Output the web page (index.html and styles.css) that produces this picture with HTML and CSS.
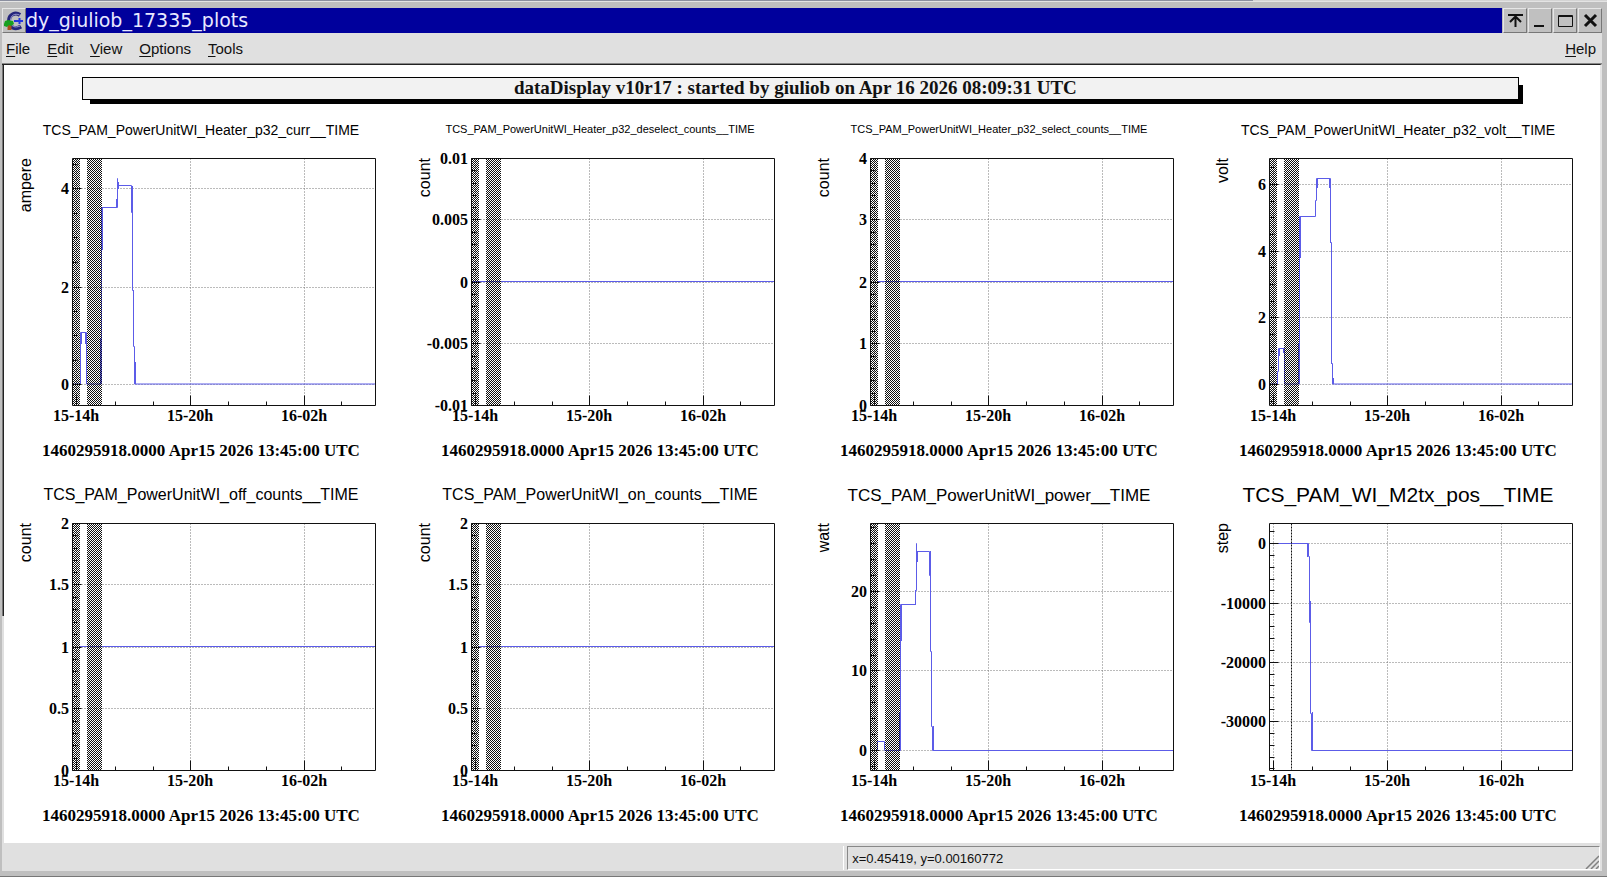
FILE: index.html
```html
<!DOCTYPE html>
<html lang="en">
<head>
    <meta charset="UTF-8">
    <meta name="viewport" content="width=device-width, initial-scale=1.0">
    <title>dy_giuliob_17335_plots</title>
    <link rel="stylesheet" href="styles.css">
</head>
<body>

<div class="desktop-edge"></div>

<div class="window">
    <div class="titlebar">
        <button class="win-btn" aria-label="Window menu">
            <svg width="22" height="23" viewBox="0 0 22 23">
                <path d="M17 6C12.500 3 6 5 6 12s6.500 9 12 5.500" fill="none" stroke="#26267c" stroke-width="4"/>
                <path d="M16.500 6C12 4 7.500 6 7.500 12s5 7 9.500 5" fill="none" stroke="#9a9ad0" stroke-width="1"/>
                <path d="M11 12h9M16.500 9v6" stroke="#2436e0" stroke-width="2"/>
                <path d="M4.500 15h4v6h-4z" fill="#a8501c"/>
                <path d="M1 15l1-3 3-1 5 1 1 3-3 2-2-1-2 2-3-1z" fill="#18a020"/>
            </svg>
        </button>
        <h1>dy_giuliob_17335_plots</h1>
        <button class="win-btn" aria-label="Shade">
            <svg width="21" height="21" viewBox="0 0 21 21"><path d="M3 5h15M10.500 6v11M5 12l5.500-5.500L16 12" fill="none" stroke="#111" stroke-width="2"/></svg>
        </button>
        <button class="win-btn" aria-label="Minimize">
            <svg width="21" height="21" viewBox="0 0 21 21"><path d="M4 16h10" stroke="#111" stroke-width="2"/></svg>
        </button>
        <button class="win-btn" aria-label="Maximize">
            <svg width="21" height="21" viewBox="0 0 21 21"><path d="M3.500 5.500h14v11h-14zM3 6.500h15" fill="none" stroke="#111"/></svg>
        </button>
        <button class="win-btn" aria-label="Close">
            <svg width="21" height="21" viewBox="0 0 21 21"><path d="M5 5l11 11M16 5L5 16" stroke="#111" stroke-width="3"/></svg>
        </button>
    </div>

    <div class="menubar">
        <button><u>F</u>ile</button>
        <button><u>E</u>dit</button>
        <button><u>V</u>iew</button>
        <button><u>O</u>ptions</button>
        <button><u>T</u>ools</button>
        <button class="help"><u>H</u>elp</button>
    </div>

    <div class="canvas">
        <div class="banner">dataDisplay v10r17 : started by giuliob on Apr 16 2026 08:09:31 UTC</div>
        <div class="plots" id="plots"></div>
    </div>

    <div class="statusbar">
        <div class="status-left"></div>
        <div class="status-text">x=0.45419, y=0.00160772
            <svg class="grip" width="14" height="14" viewBox="0 0 14 14">
                <path d="M1 14L14 1M6 14l8-8M11 14l3-3" stroke="#808080" stroke-width="1.500"/>
            </svg>
        </div>
    </div>
</div>

<!-- shared fill for the masked time ranges -->
<svg class="defs" width="0" height="0">
    <pattern id="hatch" width="2" height="2" patternUnits="userSpaceOnUse">
        <rect width="1" height="1" fill="#111"/>
        <rect x="1" y="1" width="1" height="1" fill="#111"/>
    </pattern>
</svg>

<script>
// Frame of each plot inside its pad
const LEFT = 68.5, RIGHT = 371.5, TOP = 48.5, BOTTOM = 295.5;
const START = '1460295918.0000 Apr15 2026 13:45:00 UTC';

// labels: [text, y]; div: minor divisions per label step; bands: masked ranges
const plots = [
    { title: 'TCS_PAM_PowerUnitWI_Heater_p32_curr__TIME', size: 14, unit: 'ampere', div: 4, bands: true,
      labels: [['0', 274.5], ['2', 177.5], ['4', 78.5]],
      line: 'M68.500 274H76.500V222.500H82.500V274H97.500V97.500H113.500V68.500V75.500H127.500V102.500H128.500V180.500H129.500V236.500H130.500V274H371.500',
      thick: 'M77.500 222v12M81.500 222v12M96.500 228v46M98.500 97v43M112.500 89v9M114.500 72v7M128.500 76v27M129.500 180v7M131.500 252v22' },
    { title: 'TCS_PAM_PowerUnitWI_Heater_p32_deselect_counts__TIME', size: 11, unit: 'count', div: 5, bands: true,
      labels: [['-0.01', 295.5], ['-0.005', 233.5], ['0', 172.5], ['0.005', 109.5], ['0.01', 48.5]],
      line: 'M68.500 171.500H371.500' },
    { title: 'TCS_PAM_PowerUnitWI_Heater_p32_select_counts__TIME', size: 11, unit: 'count', div: 5, bands: true,
      labels: [['0', 295.5], ['1', 233.5], ['2', 172.5], ['3', 109.5], ['4', 48.5]],
      line: 'M76 171.500H371.500' },
    { title: 'TCS_PAM_PowerUnitWI_Heater_p32_volt__TIME', size: 14, unit: 'volt', div: 4, bands: true,
      labels: [['0', 274.5], ['2', 207.5], ['4', 141.5], ['6', 74.5]],
      line: 'M68.500 274H76.500V261.500H77.500V238.500H83.500V274H98.500V106.500H114.500V90.500H115.500V68.500H129.500V132.500H130.500V253.500H131.500V274H371.500',
      thick: 'M78.500 239v7M82.500 239v4M97.500 233v41M99.500 106v42M114.500 97v9M116.500 69v9M128.500 69v9M129.500 107v26M130.500 222v32M132.500 268v6' },
    { title: 'TCS_PAM_PowerUnitWI_off_counts__TIME', size: 16, unit: 'count', div: 5, bands: true,
      labels: [['0', 295.5], ['0.5', 233.5], ['1', 172.5], ['1.5', 109.5], ['2', 48.5]],
      line: 'M76 171.500H371.500' },
    { title: 'TCS_PAM_PowerUnitWI_on_counts__TIME', size: 16, unit: 'count', div: 5, bands: true,
      labels: [['0', 295.5], ['0.5', 233.5], ['1', 172.5], ['1.5', 109.5], ['2', 48.5]],
      line: 'M76 171.500H371.500' },
    { title: 'TCS_PAM_PowerUnitWI_power__TIME', size: 17, unit: 'watt', div: 5, bands: true,
      labels: [['0', 275.5], ['10', 195.5], ['20', 116.5]],
      line: 'M68.500 275.500H75.500V266.500H82.500V275.500H98.500V129.500H113.500V115.500H114.500V68.500V76.500H127.500V100.500H128.500V176.500H129.500V251.500H130.500V275.500H371.500',
      thick: 'M97.500 238v38M99.500 129v37M113.500 115v15M115.500 76v11M128.500 76v25M131.500 251v24' },
    { title: 'TCS_PAM_WI_M2tx_pos__TIME', size: 21, unit: 'step', div: 5, bands: false,
      labels: [['-30000', 246.5], ['-20000', 187.5], ['-10000', 128.5], ['0', 68.5]],
      line: 'M76.500 68.500H107.500V81.500H108.500V147.500H109.500V238.500H110.500V275.500H371.500',
      thick: 'M106.500 69v13M109.500 126v22M111.500 237v39' }
];

const hours = [['15-14h', 72.5], ['15-20h', 186.5], ['16-02h', 300.5]];
const minorHours = [111.5, 149.5, 224.5, 262.5, 337.5];

function yTicks(p) {
    const first = p.labels[0][1];
    const last = p.labels[p.labels.length - 1][1];
    const step = (first - last) / (p.labels.length - 1) / p.div;
    let d = '';
    for (let i = -10; i < 40; i++) {
        const y = Math.round(first - i * step - 0.5) + 0.5;
        if (y > TOP && y < BOTTOM && i % p.div !== 0) {
            d += `M${LEFT} ${y}h5`;
        }
    }
    p.labels.forEach(l => d += `M${LEFT} ${l[1]}h9`);
    return d;
}

function drawPlot(p) {
    const bands = p.bands
        ? `<rect x="69" y="49" width="7" height="246" fill="url(#hatch)"/>
           <rect x="83" y="49" width="15" height="246" fill="url(#hatch)"/>`
        : `<path class="mark" d="M90.500 ${TOP}V${BOTTOM}"/>`;
    const grid = p.labels.map(l => `M${LEFT} ${l[1]}H${RIGHT}`).join('') +
                 hours.map(h => `M${h[1]} ${TOP}V${BOTTOM}`).join('');
    const xTicks = hours.map(h => `M${h[1]} ${BOTTOM}v-10`).join('') +
                   minorHours.map(x => `M${x} ${BOTTOM}v-4`).join('');

    return `<svg class="plot" viewBox="0 0 399 365" role="img" aria-label="${p.title}">
        <path class="grid" d="${grid}"/>
        <path class="trace" d="${p.line}${p.thick || ''}"/>
        ${bands}
        <path class="axis" d="M${LEFT} ${TOP}H${RIGHT}V${BOTTOM}H${LEFT}z${yTicks(p)}${xTicks}"/>
        <text class="title" x="197" y="${20 + Math.floor(p.size * 0.36)}" font-size="${p.size}">${p.title}</text>
        <text class="unit" transform="translate(27 48) rotate(-90)">${p.unit}</text>
        ${p.labels.map(l => `<text class="ylab" x="65" y="${l[1] + 5.5}">${l[0]}</text>`).join('')}
        ${hours.map(h => `<text class="xlab" x="${h[1] - 0.5}" y="311">${h[0]}</text>`).join('')}
        <text class="start" x="197" y="346">${START}</text>
    </svg>`;
}

document.getElementById('plots').innerHTML = plots.map(drawPlot).join('');
</script>
</body>
</html>
```
FILE: styles.css
```css
* {
    box-sizing: border-box;
}
body {
    margin: 0;
    min-height: 100vh;
    display: flex;
    flex-direction: column;
    background-color: #bfbfbf;
    font-family: "Liberation Sans", Arial, sans-serif;
    color: #111;
}
button {
    font: inherit;
    color: inherit;
    border: none;
    padding: 0;
    background: none;
}
.desktop-edge {
    height: 2px;
    background: linear-gradient(to right, #8b8f9f 78%, #d4d4d4 78%);
    border-bottom: 1px solid #e4e4e4;
}
.window {
    flex: 1;
    display: flex;
    flex-direction: column;
    padding: 6px 5px 5px 2px;
    border-bottom: 1px solid #777;
}

/* title bar */
.titlebar {
    display: flex;
    gap: 1px;
    height: 25px;
}
.titlebar h1 {
    flex: 1;
    margin: 0 0 0 -1px;
    background-color: #00009c;
    color: #e8e8ff;
    font-family: "DejaVu Sans", sans-serif;
    font-size: 19px;
    font-weight: normal;
    line-height: 24px;
}
.win-btn {
    width: 24px;
    height: 25px;
    display: flex;
    align-items: center;
    justify-content: center;
    background-color: #c0c0c0;
    border: 1px solid;
    border-color: #e6e6e6 #777 #777 #e6e6e6;
}

/* menu */
.menubar {
    display: flex;
    align-items: center;
    gap: 17px;
    height: 31px;
    padding: 0 6px 0 4px;
    background-color: #e0e0e0;
    border-bottom: 1px solid #888;
    font-size: 15px;
}
.menubar u {
    text-underline-offset: 2px;
}
.menubar .help {
    margin-left: auto;
}

/* plot canvas */
.canvas {
    flex: 1;
    padding: 12px 0 3px 2px;
    border-top: 1px solid #222;
    border-right: 2px solid #e4e4e4;
    background: linear-gradient(to right, #777 1px, #222 1px) no-repeat left top / 2px 551px,
                linear-gradient(#e0e0e0, #e0e0e0) no-repeat left top / 2px 100%,
                #fff;
}
.banner {
    width: 90%;
    margin: 0 5% 11px 4.9%;
    padding-right: 10px;
    border: 1px solid #000;
    background-color: #f2f2f2;
    box-shadow: 6px 6px 0 -2px #000;
    text-align: center;
    font-family: "Liberation Serif", "Times New Roman", serif;
    font-size: 19px;
    font-weight: bold;
    line-height: 20px;
    padding-bottom: 1px;
}
.plots {
    display: grid;
    grid-template-columns: repeat(4, 1fr);
    margin-top: -1px;
}
.plot {
    display: block;
    width: 100%;
}
.plot path {
    fill: none;
}
.grid {
    stroke: #777;
    stroke-dasharray: 1 2;
}
.mark {
    stroke: #111;
    stroke-dasharray: 2 1;
}
.axis {
    stroke: #111;
}
.trace {
    stroke: #5c5ce8;
}
.title {
    text-anchor: middle;
}
.unit {
    font-size: 16px;
    text-anchor: end;
}
.ylab, .xlab, .start {
    font-family: "Liberation Serif", "Times New Roman", serif;
    font-weight: bold;
    font-size: 16px;
}
.ylab {
    text-anchor: end;
}
.xlab, .start {
    text-anchor: middle;
}
.start {
    font-size: 17px;
}
.defs {
    position: absolute;
}

/* status bar */
.statusbar {
    display: flex;
    gap: 3px;
    height: 28px;
    padding: 3px 2px 1px 0;
    background-color: #e0e0e0;
}
.status-left {
    width: 52.7%;
    border-right: 1px solid #fff;
}
.status-text {
    flex: 1;
    display: flex;
    align-items: center;
    justify-content: space-between;
    padding-left: 4px;
    border: 1px solid;
    border-color: #888 #fff #fff #888;
    font-size: 13px;
}
.grip {
    align-self: flex-end;
}
```
